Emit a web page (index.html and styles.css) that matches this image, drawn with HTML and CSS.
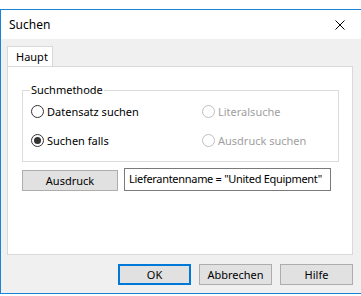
FILE: index.html
```html
<!DOCTYPE html>
<html lang="de">
  <head>
    <meta charset="UTF-8" />
    <title>Suchen</title>
    <link rel="stylesheet" href="styles.css">
  </head>
  <body>
    <div class="window">
      <div class="titlebar">
        <span class="title">Suchen</span>
        <svg class="close" width="10" height="10" viewBox="0 0 10 10">
          <path d="M0.5 0.5 L9.5 9.5 M9.5 0.5 L0.5 9.5" stroke="#000" stroke-width="1" fill="none" />
        </svg>
      </div>

      <div class="client">
        <div class="tabs">
          <div class="tab active">Haupt</div>
        </div>
        <div class="panel">
          <fieldset class="group">
            <legend>Suchmethode</legend>
            <div class="radio-grid">
              <label class="radio"><span class="dot"></span>Datensatz suchen</label>
              <label class="radio disabled"><span class="dot"></span>Literalsuche</label>
              <label class="radio checked"><span class="dot"></span>Suchen falls</label>
              <label class="radio disabled"><span class="dot"></span>Ausdruck suchen</label>
            </div>
          </fieldset>

          <div class="expr-row">
            <button class="btn expr-btn">Ausdruck</button>
            <div class="field">Lieferantenname = "United Equipment"</div>
          </div>
        </div>

        <div class="actions">
          <button class="btn default">OK</button>
          <button class="btn">Abbrechen</button>
          <button class="btn">Hilfe</button>
        </div>
      </div>
    </div>
  </body>
</html>
```

FILE: styles.css
```css
/* Grundlagen */
body {
  margin: 0;
  background-color: #fff;
  font-family: "Noto Sans", "Open Sans", sans-serif;
  font-size: 11px;
  color: #000;
}

.window {
  margin-top: 9px;
  height: 283px;
  border-top: 1px solid #1883d7;
  border-left: 1px solid #1883d7;
  border-bottom: 1px solid #1883d7;
  display: flex;
  flex-direction: column;
}

/* Titelleiste */
.titlebar {
  height: 29px;
  background-color: #fff;
  display: flex;
  align-items: center;
  justify-content: space-between;
  padding: 0 16px 0 8px;
}

.title {
  font-size: 12px;
  margin-top: -1px;
}

/* Inhalt */
.client {
  flex: 1;
  background-color: #f0f0f0;
  padding: 7px 8px 0 6px;
  display: flex;
  flex-direction: column;
}

.tabs {
  display: flex;
  height: 20px;
  position: relative;
  z-index: 1;
}

.tab {
  width: 46px;
  height: 20px;
  box-sizing: border-box;
  border: 1px solid #d9d9d9;
  border-bottom: none;
  background-color: #fff;
  padding: 2px 0 0 8px;
  line-height: 16px;
}

.panel {
  height: 189px;
  box-sizing: border-box;
  background-color: #fff;
  border: 1px solid #d9d9d9;
  padding: 15px 13px 0 14px;
}

/* Gruppe */
.group {
  margin: 0;
  padding: 0 0 8px 8px;
  border: 1px solid #dcdcdc;
  height: 80px;
  box-sizing: border-box;
}

.group legend {
  padding: 0 1px;
  margin-left: -1px;
  line-height: 16px;
}

.radio-grid {
  display: grid;
  grid-template-columns: 171px 1fr;
  row-gap: 13px;
  margin-top: 5px;
}

.radio {
  display: flex;
  align-items: center;
  height: 16px;
  gap: 3px;
}

.dot {
  width: 13px;
  height: 13px;
  box-sizing: border-box;
  border: 1px solid #333;
  border-radius: 50%;
  background-color: #fff;
  display: flex;
  align-items: center;
  justify-content: center;
}

.radio.checked .dot::after {
  content: "";
  width: 7px;
  height: 7px;
  border-radius: 50%;
  background-color: #333;
}

.radio.disabled {
  color: #a0a0a0;
}

.radio.disabled .dot {
  border-color: #bfbfbf;
}

/* Ausdruck */
.expr-row {
  display: flex;
  align-items: flex-end;
  gap: 6px;
  margin-top: 6px;
}

.btn {
  font-family: inherit;
  font-size: 11px;
  height: 21px;
  box-sizing: border-box;
  background-color: #e1e1e1;
  border: 1px solid #adadad;
  color: #000;
  padding: 0;
  line-height: 17px;
}

.expr-btn {
  width: 96px;
}

.field {
  width: 207px;
  height: 23px;
  box-sizing: border-box;
  border: 1px solid #7a7a7a;
  background-color: #fff;
  padding: 1px 0 0 4px;
  line-height: 18px;
  letter-spacing: -0.3px;
  white-space: nowrap;
}

/* Schaltflächen */
.actions {
  display: flex;
  justify-content: flex-end;
  gap: 8px;
  margin-top: 9px;
}

.actions .btn {
  width: 73px;
}

.actions .btn.default {
  border: 2px solid #0078d7;
}
```
